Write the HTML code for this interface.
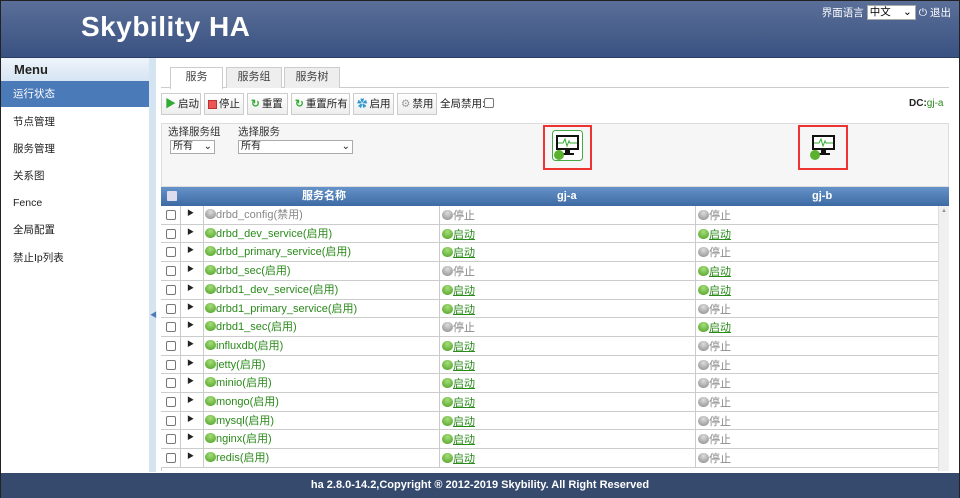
<!DOCTYPE html>
<html><head><meta charset="utf-8"><style>
*{box-sizing:border-box;margin:0;padding:0}
body{width:960px;height:498px;overflow:hidden;font-family:"Liberation Sans","Noto Sans CJK SC",sans-serif;font-size:11px;color:#222;background:#fff;position:relative;border:1px solid #222}
.abs{position:absolute}
#hd{left:0;top:0;width:958px;height:57px;background:linear-gradient(#5a6f98,#3a5282);border-bottom:1px solid #2a3d66}
#logo{left:80px;top:9px;color:#fff;font-size:28px;font-weight:bold;letter-spacing:0.5px;line-height:34px}
#lang{right:8px;top:4px;color:#fff;font-size:10.5px;display:flex;align-items:center;gap:3px;line-height:14px}
#lang .sel{background:#fff;color:#000;width:49px;height:15px;border:1px solid #aaa;padding-left:2px;line-height:13px;position:relative}
#side{left:0;top:57px;width:148px;height:414px;background:#fff}
#menuh{left:0;top:57px;width:148px;height:23px;background:linear-gradient(#eef4fb,#d6e4f3);font-weight:bold;font-size:13px;padding:3px 13px;color:#222;line-height:17px}
#act{left:0;top:80px;width:148px;height:26px;background:#4a7ab8;color:#fff;padding:0 12px;line-height:26px;font-size:10.5px}
.mi{left:12px;font-size:10.5px;color:#222;line-height:14px}
#strip{left:148px;top:57px;width:7px;height:414px;background:#d4e4f1}
.tab{top:66px;height:21px;border:1px solid #ccc;border-bottom:none;background:#eee;text-align:center;line-height:19px;color:#444}
.btn{top:92px;height:22px;border:1px solid #ccc;background:linear-gradient(#fff,#eee);line-height:20px;padding-left:3px;display:flex;align-items:center;gap:2px;font-size:10.5px}
.sel2{height:14px;border:1px solid #aaa;background:#fff;font-size:10px;line-height:12px;padding-left:2px}
#thd{left:160px;top:186px;width:788px;height:19px;background:linear-gradient(#6592c8,#3e6aa4);color:#fff;font-weight:bold;line-height:19px}
.row{left:160px;width:777px;border-bottom:1px solid #ccc;background:#fff;line-height:16px}
.row div{position:absolute;top:0;bottom:0}
.cb{width:10px;height:10px;border:1px solid #777;border-radius:2px;background:#fff;position:absolute;left:5px;top:4px}
.dot{display:inline-block;width:11px;height:10px;border-radius:6px;vertical-align:-1px}
.g{background:radial-gradient(circle at 50% 30%,#a6de7a,#4a9e22)}
.y{background:radial-gradient(circle at 50% 30%,#ddd,#888)}
.on{color:#2a8a1a}.off{color:#888}
.lk{text-decoration:underline;color:#2a8a1a}
#foot{left:0;top:472px;width:958px;height:25px;background:#364a6e;color:#fff;text-align:center;font-size:11px;line-height:25px;font-weight:bold}
</style></head><body>
<div id="hd" class="abs"></div>
<div id="logo" class="abs">Skybility HA</div>
<div id="lang" class="abs">界面语言 <span class="sel">中文<span style="position:absolute;right:3px;top:0">⌄</span></span> <span>⏻ 退出</span></div>
<div id="side" class="abs"></div>
<div id="menuh" class="abs">Menu</div>
<div id="act" class="abs">运行状态</div>
<div class="abs mi" style="top:114px">节点管理</div>
<div class="abs mi" style="top:141px">服务管理</div>
<div class="abs mi" style="top:168px">关系图</div>
<div class="abs mi" style="top:195px">Fence</div>
<div class="abs mi" style="top:222px">全局配置</div>
<div class="abs mi" style="top:250px">禁止Ip列表</div>
<div id="strip" class="abs"><span style="position:absolute;left:1px;top:252px;font-size:7px;color:#4a7ab8">◀</span></div>
<div class="abs" style="left:160px;top:86px;width:788px;height:1px;background:#ccc"></div>
<div class="abs tab" style="left:169px;width:53px;background:#fff;height:22px">服务</div>
<div class="abs tab" style="left:225px;width:56px">服务组</div>
<div class="abs tab" style="left:283px;width:56px">服务树</div>
<div class="abs btn" style="left:160px;width:40px"><span style="color:#3a3;font-size:11px">▶</span>启动</div>
<div class="abs btn" style="left:203px;width:40px"><span style="display:inline-block;width:9px;height:9px;background:#e55;border:1px solid #b33"></span>停止</div>
<div class="abs btn" style="left:246px;width:41px"><span style="color:#3a3;font-weight:bold">↻</span>重置</div>
<div class="abs btn" style="left:290px;width:59px"><span style="color:#3a3;font-weight:bold">↻</span>重置所有</div>
<div class="abs btn" style="left:352px;width:41px"><span style="color:#39c">✿</span>启用</div>
<div class="abs btn" style="left:396px;width:40px"><span style="color:#999">⚙</span>禁用</div>
<div class="abs" style="left:439px;top:96px;font-size:10.5px;line-height:14px">全局禁用:</div>
<div class="abs cb" style="left:483px;top:97px"></div>
<div class="abs" style="left:908px;top:96px;font-size:10px;font-weight:bold;line-height:14px">DC:<span style="color:#2a8a1a;font-weight:normal">gj-a</span></div>
<div class="abs" style="left:160px;top:122px;width:788px;height:64px;background:#f6f6f6;border:1px solid #ddd"></div>
<div class="abs" style="left:167px;top:125px;font-size:10.5px;color:#333;line-height:13px">选择服务组</div>
<div class="abs" style="left:237px;top:125px;font-size:10.5px;color:#333;line-height:13px">选择服务</div>
<div class="abs sel2" style="left:169px;top:139px;width:45px">所有<span style="float:right;padding-right:2px">⌄</span></div>
<div class="abs sel2" style="left:237px;top:139px;width:115px">所有<span style="float:right;padding-right:2px">⌄</span></div>
<div class="abs" style="left:542px;top:124px;width:49px;height:45px;border:2px solid #e33;padding:3px 7px">
<svg width="31" height="31" viewBox="0 0 31 31"><rect x="0.5" y="0.5" width="30" height="30" rx="3" fill="#fff" stroke="#4a4"/><rect x="4" y="5" width="23" height="15" fill="#111"/><rect x="6" y="7" width="19" height="11" fill="#fff"/><path d="M6 13h5l2-4 2 7 2-5 1 2h7" stroke="#3a3" fill="none"/><rect x="13" y="20" width="5" height="3" fill="#111"/><rect x="9" y="23" width="13" height="2" fill="#111"/><circle cx="7" cy="25" r="5" fill="#5cb030"/></svg></div>
<div class="abs" style="left:797px;top:124px;width:50px;height:45px;border:2px solid #e33;padding:3px 8px">
<svg width="31" height="31" viewBox="0 0 31 31"><rect x="4" y="5" width="23" height="15" fill="#111"/><rect x="6" y="7" width="19" height="11" fill="#fff"/><path d="M6 13h5l2-4 2 7 2-5 1 2h7" stroke="#3a3" fill="none"/><rect x="13" y="20" width="5" height="3" fill="#111"/><rect x="9" y="23" width="13" height="2" fill="#111"/><circle cx="7" cy="25" r="5" fill="#5cb030"/></svg></div>
<div id="thd" class="abs"><span class="abs" style="left:6px;top:4px;width:10px;height:10px;background:#dde;border-radius:1px"></span><span class="abs" style="left:141px;top:0">服务名称</span><span class="abs" style="left:396px;top:0">gj-a</span><span class="abs" style="left:651px;top:0">gj-b</span></div>
<div class="abs" style="left:937px;top:205px;width:11px;height:265px;background:#f0f0f0;border-left:1px solid #ddd"><span style="position:absolute;left:2px;top:2px;font-size:6px;color:#999">▲</span></div>
<div class="abs" style="left:160px;top:205px;width:1px;height:265px;background:#ccc"></div>
<div id="rows"></div>
<div id="foot" class="abs">ha 2.8.0-14.2,Copyright ® 2012-2019 Skybility. All Right Reserved</div>
<script>
var d=[["drbd_config","禁用",0,0,0],["drbd_dev_service","启用",1,1,1],["drbd_primary_service","启用",1,1,0],["drbd_sec","启用",1,0,1],["drbd1_dev_service","启用",1,1,1],["drbd1_primary_service","启用",1,1,0],["drbd1_sec","启用",1,0,1],["influxdb","启用",1,1,0],["jetty","启用",1,1,0],["minio","启用",1,1,0],["mongo","启用",1,1,0],["mysql","启用",1,1,0],["nginx","启用",1,1,0],["redis","启用",1,1,0]];
var h="";
function st(s){return s?'<span class="dot g"></span><span class="lk">启动</span>':'<span class="dot y"></span><span class="off">停止</span>';}
d.forEach(function(r,i){var t=Math.round(205+i*18.7),n=Math.round(205+(i+1)*18.7);
h+='<div class="abs row" style="top:'+t+'px;height:'+(n-t)+'px"><span class="cb"></span><div style="left:19px;width:1px;background:#ccc"></div><div style="left:26px;top:0;font-size:7px">▶</div><div style="left:42px;width:1px;background:#ccc"></div><div style="left:44px;top:1px" class="'+(r[2]?'on':'off')+'"><span class="dot '+(r[2]?'g':'y')+'"></span>'+r[0]+'('+r[1]+')</div><div style="left:278px;width:1px;background:#ccc"></div><div style="left:281px;top:2px">'+st(r[3])+'</div><div style="left:534px;width:1px;background:#ccc"></div><div style="left:537px;top:2px">'+st(r[4])+'</div></div>';});
document.getElementById("rows").innerHTML=h;
</script>
</body></html>
